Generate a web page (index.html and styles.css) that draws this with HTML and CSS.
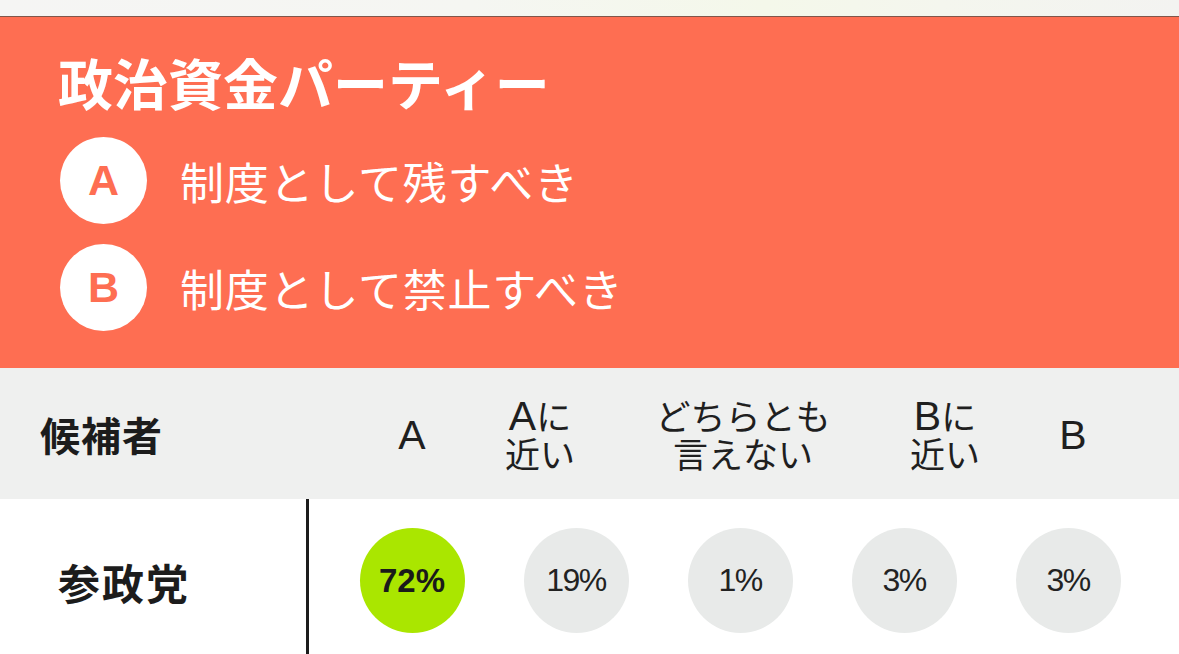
FILE: index.html
```html
<!DOCTYPE html>
<html lang="ja">
<head>
<meta charset="utf-8">
<link rel="stylesheet" href="styles.css">
</head>
<body>
<div class="topbar"></div>
<section class="question">
  <h1 class="title">政治資金パーティー</h1>
  <div class="option">
    <span class="badge">A</span>
    <span class="option-text">制度として残すべき</span>
  </div>
  <div class="option">
    <span class="badge">B</span>
    <span class="option-text">制度として禁止すべき</span>
  </div>
</section>
<div class="table-head">
  <div class="head-name">候補者</div>
  <div class="head-col c1"><span class="line"><span class="lat">A</span></span></div>
  <div class="head-col c2"><span class="line"><span class="lat">A</span>に</span><span class="line">近い</span></div>
  <div class="head-col c3"><span class="line">どちらとも</span><span class="line">言えない</span></div>
  <div class="head-col c4"><span class="line"><span class="lat">B</span>に</span><span class="line">近い</span></div>
  <div class="head-col c5"><span class="line"><span class="lat">B</span></span></div>
</div>
<div class="table-row">
  <div class="row-name">参政党</div>
  <div class="row-values">
    <div class="cell"><span class="dot dot-top">72%</span></div>
    <div class="cell"><span class="dot">19%</span></div>
    <div class="cell"><span class="dot">1%</span></div>
    <div class="cell"><span class="dot">3%</span></div>
    <div class="cell"><span class="dot">3%</span></div>
  </div>
</div>
</body>
</html>
```
FILE: styles.css
```css
* { box-sizing: border-box; }
html, body {
  margin: 0;
  padding: 0;
  background: #ffffff;
  overflow: hidden;
}
body {
  font-family: "Noto Sans CJK JP", "Noto Sans", sans-serif;
  color: #1c1c1c;
  width: 1179px;
  height: 654px;
}
.topbar {
  height: 17px;
  background: linear-gradient(90deg, #f5f5f4 0%, #f5f6f2 40%, #f4f8ea 65%, #f4f6ee 80%, #f3f3f1 100%);
  border-bottom: 1px solid #80564a;
}
.question {
  background: #fe6e52;
  height: 351px;
  padding: 32px 60px 0 60px;
  color: #ffffff;
}
.title {
  margin: 0 0 0 -2px;
  font-size: 55px;
  line-height: 64px;
  font-weight: 700;
  letter-spacing: 0;
}
.option {
  display: flex;
  align-items: center;
  height: 87px;
  margin-top: 20px;
}
.question .title + .option { margin-top: 24px; }
.badge {
  width: 87px;
  height: 87px;
  border-radius: 50%;
  background: #ffffff;
  color: #fe6e52;
  display: flex;
  align-items: center;
  justify-content: center;
  font-family: "Liberation Sans", Arial, sans-serif;
  font-weight: 700;
  font-size: 43px;
  flex: none;
}
.option-text {
  margin-left: 33px;
  font-size: 44px;
  font-weight: 400;
  line-height: 1;
  letter-spacing: 0.8px;
}
.table-head {
  height: 131px;
  background: #eff0ef;
  display: flex;
  align-items: center;
}
.head-name {
  width: 352px;
  padding-left: 40px;
  font-size: 40px;
  font-weight: 700;
  letter-spacing: 1px;
}
.head-col {
  display: flex;
  flex-direction: column;
  align-items: center;
  font-size: 35px;
  font-weight: 400;
  color: #1f1f1f;
}
.line {
  display: block;
  height: 38px;
  line-height: 38px;
}
.lat {
  font-family: "Liberation Sans", Arial, sans-serif;
  font-size: 41px;
  line-height: 38px;
}
.c1 { width: 120px; }
.c2 { width: 136px; }
.c3 { width: 270px; }
.c4 { width: 134px; }
.c5 { width: 122px; }
.table-row {
  display: flex;
  height: 155px;
}
.row-name {
  width: 309px;
  border-right: 3px solid #1c1c1c;
  padding-left: 58px;
  padding-top: 55px;
  font-size: 42px;
  font-weight: 700;
  letter-spacing: 2px;
  line-height: 56px;
}
.row-values {
  display: grid;
  grid-template-columns: repeat(5, 164px);
  padding-left: 21px;
  padding-top: 29px;
}
.cell {
  display: flex;
  justify-content: center;
}
.dot {
  width: 105px;
  height: 105px;
  border-radius: 50%;
  background: #e8eae9;
  display: flex;
  align-items: center;
  justify-content: center;
  font-family: "Liberation Sans", Arial, sans-serif;
  font-size: 32px;
  color: #222;
  letter-spacing: -1.5px;
}
.dot-top {
  background: #aae600;
  font-weight: 700;
  font-size: 33px;
  letter-spacing: 0;
  color: #1a1a1a;
}
```
